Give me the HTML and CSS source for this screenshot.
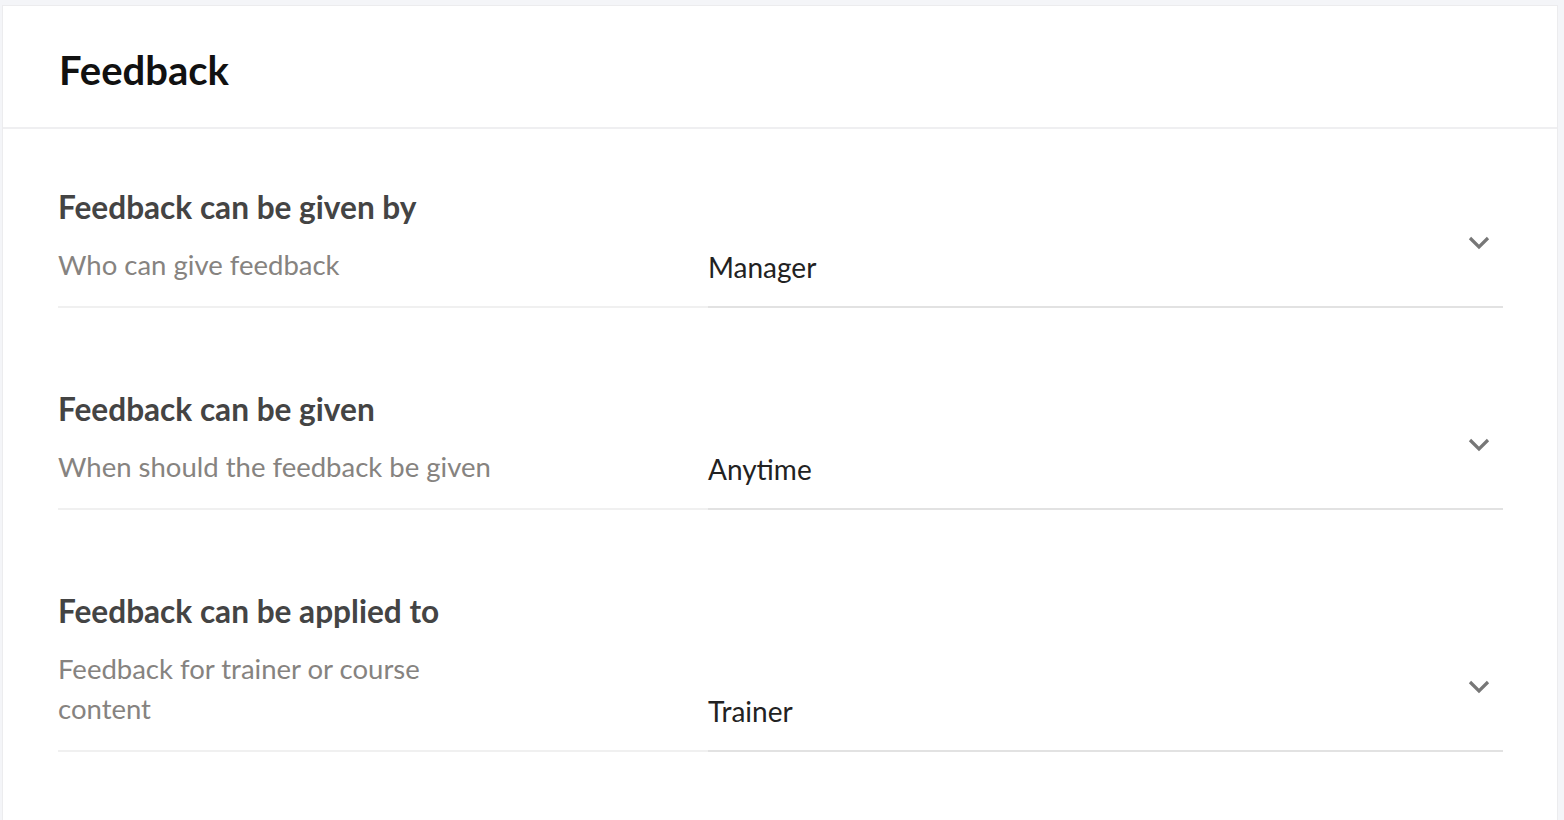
FILE: index.html
```html
<!DOCTYPE html>
<html lang="en">
<head>
  <meta charset="UTF-8">
  <title>Feedback</title>
  <link rel="stylesheet" href="styles.css">
</head>
<body>
  <div class="card">
    <div class="card-header">
      <h1>Feedback</h1>
    </div>
    <div class="card-body">
      <div class="setting">
        <div class="setting-label">
          <h2>Feedback can be given by</h2>
          <p>Who can give feedback</p>
        </div>
        <div class="setting-value">
          <span class="value">Manager</span>
          <svg class="chevron" width="22" height="14" viewBox="0 0 22 14"><path d="M2 2l9 9 9-9" fill="none" stroke="#777" stroke-width="3.2"/></svg>
        </div>
      </div>
      <div class="setting">
        <div class="setting-label">
          <h2>Feedback can be given</h2>
          <p>When should the feedback be given</p>
        </div>
        <div class="setting-value">
          <span class="value">Anytime</span>
          <svg class="chevron" width="22" height="14" viewBox="0 0 22 14"><path d="M2 2l9 9 9-9" fill="none" stroke="#777" stroke-width="3.2"/></svg>
        </div>
      </div>
      <div class="setting">
        <div class="setting-label">
          <h2>Feedback can be applied to</h2>
          <p>Feedback for trainer or course<br>content</p>
        </div>
        <div class="setting-value">
          <span class="value">Trainer</span>
          <svg class="chevron" width="22" height="14" viewBox="0 0 22 14"><path d="M2 2l9 9 9-9" fill="none" stroke="#777" stroke-width="3.2"/></svg>
        </div>
      </div>
    </div>
  </div>
</body>
</html>
```
FILE: styles.css
```css
body {
  margin: 0;
  padding: 5px 6px 0 2px;
  background-color: #f4f5f8;
  font-family: Lato, "Open Sans", sans-serif;
}
.card {
  background: #fff;
  border: 1px solid #ececee;
  border-bottom: none;
  min-height: 815px;
  box-sizing: border-box;
}
.card-header {
  padding: 40px 56px 33px;
  border-bottom: 2px solid #efeff1;
}
.card-header h1 {
  margin: 0;
  font-size: 40px;
  line-height: 48px;
  font-weight: 700;
  color: #111;
}
.card-body {
  padding: 58px 54px 0 55px;
}
.setting {
  display: flex;
  margin-bottom: 81px;
}
.setting-label {
  width: 650px;
  padding-bottom: 21px;
  border-bottom: 2px solid #f0f0f0;
}
.setting-label h2 {
  margin: 0 0 18px;
  font-size: 31.6px;
  line-height: 40px;
  font-weight: 700;
  color: #444;
}
.setting-label p {
  margin: 0;
  font-size: 27.5px;
  line-height: 40px;
  color: #868380;
}
.setting-value {
  flex: 1;
  display: flex;
  align-items: flex-end;
  justify-content: space-between;
  padding: 0 13px 19px 0;
  border-bottom: 2px solid #e2e2e2;
}
.value {
  font-size: 28px;
  line-height: 40px;
  color: #222;
}
.chevron {
  margin-bottom: 37px;
}
```
